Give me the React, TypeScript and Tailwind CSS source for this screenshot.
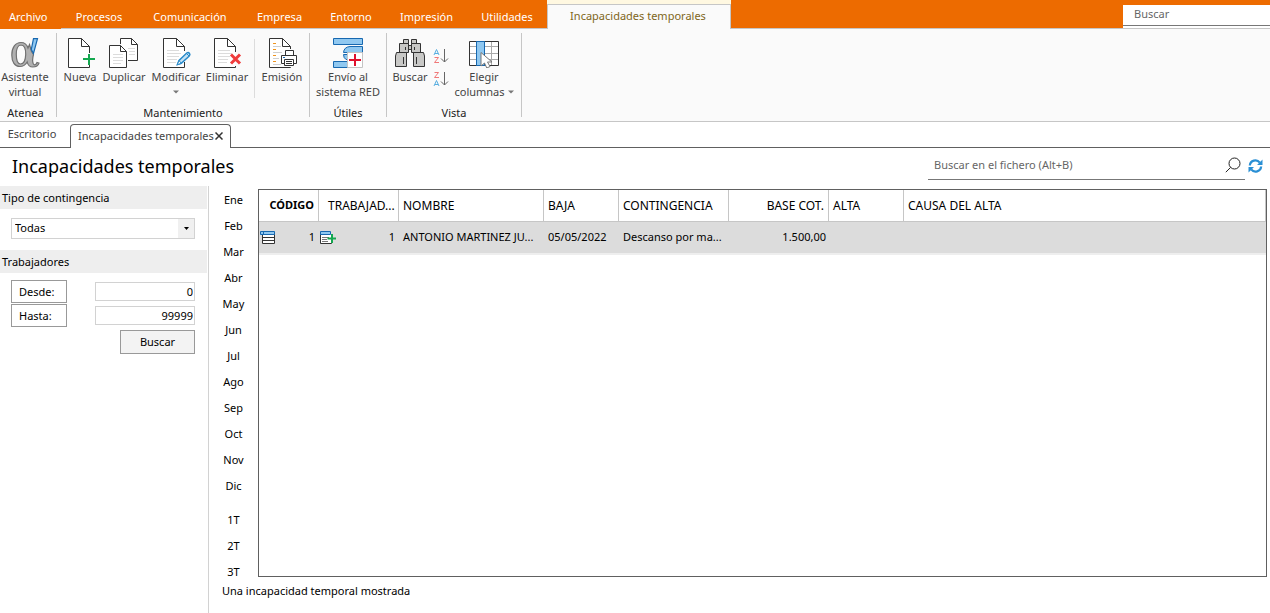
import React from 'react';

const menus: { label: string; width: string }[] = [
  { label: 'Procesos', width: 'w-[76px]' },
  { label: 'Comunicación', width: 'w-[106px]' },
  { label: 'Empresa', width: 'w-[73px]' },
  { label: 'Entorno', width: 'w-[70px]' },
  { label: 'Impresión', width: 'w-[81px]' },
  { label: 'Utilidades', width: 'w-[80px]' },
];

const months = ['Ene', 'Feb', 'Mar', 'Abr', 'May', 'Jun', 'Jul', 'Ago', 'Sep', 'Oct', 'Nov', 'Dic'];
const quarters = ['1T', '2T', '3T'];

const columns: { label: string; width: string; align: string }[] = [
  { label: 'CÓDIGO', width: 'w-[60px]', align: 'pr-[4px] text-right text-[11px] font-bold' },
  { label: 'TRABAJAD...', width: 'w-[80px]', align: 'pl-[9px] text-left font-normal' },
  { label: 'NOMBRE', width: 'w-[145px]', align: 'pl-[4px] text-left font-normal' },
  { label: 'BAJA', width: 'w-[75px]', align: 'pl-[4px] text-left font-normal' },
  { label: 'CONTINGENCIA', width: 'w-[110px]', align: 'pl-[4px] text-left font-normal' },
  { label: 'BASE COT.', width: 'w-[100px]', align: 'pr-[4px] text-right font-normal' },
  { label: 'ALTA', width: 'w-[75px]', align: 'pl-[4px] text-left font-normal' },
  { label: 'CAUSA DEL ALTA', width: '', align: 'pl-[4px] text-left font-normal' },
];

function Icon({ children }: { children: React.ReactNode }) {
  return (
    <svg width="32" height="32" viewBox="0 0 32 32" fill="none" className="shrink-0" aria-hidden="true">
      {children}
    </svg>
  );
}

function AlphaIcon() {
  return (
    <Icon>
      <path
        d="M20.500 8.500L22.500 15.500L24.500 18.500C23.500 22 23.300 25.500 24.300 27.800C25.200 29.500 27 29 28 26.500L30 27.200C29 30.500 26.500 31 23.800 31C20.500 31 18.800 29 18.200 26C16.500 29 13.800 30.500 10.800 30.500C5.800 30.500 2.800 26 2.800 19C2.800 11.500 6.500 6.500 12 6.500C15.500 6.500 17.800 8.500 19 12ZM12 9C8.800 9 7.300 13 7.300 18.500C7.300 24.500 8.500 28 11.500 28C14.500 28 16.500 24 16.700 18.500C16.800 12.500 15.300 9 12 9Z"
        fill="#b0b0b0"
        stroke="#707070"
        strokeWidth="1.200"
        fillRule="evenodd"
      />
      <path d="M24.500 2.700H28.500L24.500 17.500L22.300 13.500Z" fill="#90c8f0" stroke="#1768b0" strokeWidth="1.200" />
    </Icon>
  );
}

function PageLines({ x }: { x: number }) {
  return <path d={`M${x} 14.500h12M${x} 17.500h14M${x} 20.500h12M${x} 23.500h10M${x} 26.500h9`} stroke="#dcdcdc" />;
}

function NewIcon() {
  return (
    <Icon>
      <path d="M25.500 17V10.500L17.500 2.500H4.500V31.500H25.500V29" fill="#fff" stroke="#333" />
      <path d="M17.500 2.500V10.500H25.500" stroke="#333" />
      <path d="M25 18V29M19 23H31" stroke="#14a84f" strokeWidth="2" />
    </Icon>
  );
}

function CopyIcon() {
  return (
    <Icon>
      <g transform="translate(1 0)">
        <path d="M11.500 8V2.500H22.500L28.500 8.500V24.500H19" fill="#fff" stroke="#333" />
        <path d="M22.500 2.500V8.500H28.500" stroke="#333" />
        <path d="M19 12.500h7M20 15.500h6M20 18.500h6" stroke="#dcdcdc" />
        <path d="M.500 9.500H11.500L17.500 15.500V31.500H.500Z" fill="#fff" stroke="#333" />
        <path d="M11.500 9.500V15.500H17.500" stroke="#333" />
        <path d="M4 18.500h10M4 21.500h10M4 24.500h10M4 27.500h8" stroke="#dcdcdc" />
      </g>
    </Icon>
  );
}

function EditIcon() {
  return (
    <Icon>
      <path d="M24.500 15V10.500L16.500 2.500H3.500V31.500H24.500V26" fill="#fff" stroke="#333" />
      <path d="M16.500 2.500V10.500H24.500" stroke="#333" />
      <PageLines x={7} />
      <path d="M17.300 28.700L19 24.500L27 16.800Q28.500 16 29.500 17.500Q30.500 19 29.300 20L21.300 27.300Z" fill="#c5e2f5" stroke="#2588c8" strokeWidth="1.400" />
      <path d="M19 24.500L21.300 27.300L17.300 28.700ZM26.500 17.500L29 20" fill="#fff" stroke="#2588c8" />
    </Icon>
  );
}

function DeleteIcon() {
  return (
    <Icon>
      <path d="M24.500 16V10.500L16.500 2.500H3.500V31.500H24.500V30" fill="#fff" stroke="#333" />
      <path d="M16.500 2.500V10.500H24.500" stroke="#333" />
      <PageLines x={7} />
      <path d="M20 18.500L29 27.500M29 18.500L20 27.500" stroke="#f03c3c" strokeWidth="3" />
    </Icon>
  );
}

function PrintIcon() {
  return (
    <Icon>
      <path d="M24.500 13V10.500L16.500 2.500H3.500V31.500H24.500V31" fill="#fff" stroke="#333" />
      <path d="M16.500 2.500V10.500H24.500" stroke="#333" />
      <path d="M7 7.500h3M7 13.500h3M7 19.500h3M7 25.500h3" stroke="#f0941e" />
      <path d="M7 10.500h8M7 16.500h9M7 22.500h6M7 28.500h8" stroke="#cfcfcf" />
      <path d="M19.500 19.500V14.500H27.500V19.500" fill="#fff" stroke="#333" />
      <path d="M15.500 19.500H30.500V27.500H15.500Z" fill="#fff" stroke="#333" />
      <path d="M18.500 23.500H27.500V29.500H18.500Z" fill="#fff" stroke="#333" />
      <path d="M20 25.500h6M20 27.500h6" stroke="#333" />
      <path d="M17 21.500h2" stroke="#1768b0" />
    </Icon>
  );
}

function RedSystemIcon() {
  return (
    <Icon>
      <g fill="#90c8f0" stroke="#1768b0">
        <path d="M1.500 2.500H30.500V8.500H1.500Z" />
        <path d="M30.500 10.500V16.500H11.500Q12 11 18 10.500Z" />
        <path d="M11.500 18.500H18.500V23.500H14Q11.500 22 11.500 18.500Z" />
        <path d="M1.500 25.500H18V31.500H1.500Z" />
      </g>
      <path d="M15.500 16.500H30.500V31.500H15.500Z" fill="#fff" stroke="#c4c4c4" />
      <path d="M23 18V30M17 24H29" stroke="#e0102c" strokeWidth="2" />
    </Icon>
  );
}

function BinocularsIcon() {
  return (
    <Icon>
      <g fill="#c8c8c6" stroke="#333">
        <path d="M9.500 3.500H14.500V8H9.500ZM17.500 3.500H22.500V8H17.500Z" />
        <path d="M14.500 9.500H17.500V13.500H14.500Z" />
        <path d="M5.500 7.500H14.500V16.500H5.500ZM17.500 7.500H26.500V16.500H17.500Z" />
        <path d="M2.500 16.500H12.500V30.500H1.500V20ZM19.500 16.500H29.500L30.500 20V30.500H19.500Z" />
      </g>
      <path d="M9.500 21V28M22.500 21V28M11.500 11V14M20.500 11V14" stroke="#333" />
    </Icon>
  );
}

function ColumnsIcon() {
  return (
    <Icon>
      <path d="M1.500 5.500H30.500V29.500H1.500Z" fill="#fff" stroke="#333" />
      <path d="M2 10.500H30M2 17.500H30M2 23.500H30M23.500 6V29" stroke="#aaa" />
      <path d="M8.500 5.500H16.500V29.500H8.500Z" fill="#90c8f0" stroke="#1768b0" />
      <path d="M13 16.500V30L16.500 27L18.800 32L22 30.500L19.500 26H24Z" fill="#fff" stroke="#777" />
    </Icon>
  );
}

function SortIcon({ reverse = false }: { reverse?: boolean }) {
  const a = 'M1 7L3.500 1.500L6 7M2 5.500H5';
  const z = 'M1.500 1.500H5.500L1.500 6.500H6';
  return (
    <svg width="16" height="17" viewBox="0 0 16 17" fill="none" aria-hidden="true">
      <path d={reverse ? z : a} stroke={reverse ? '#f07878' : '#58aee0'} />
      <path d={reverse ? a : z} transform="translate(0 8)" stroke={reverse ? '#58aee0' : '#f07878'} />
      <path d="M11.500 1V14M8 10.500L11.500 14L15 10.500" stroke="#666" />
    </svg>
  );
}

function Caret() {
  return (
    <svg width="6" height="4" viewBox="0 0 6 4" className="inline-block" aria-hidden="true">
      <path d="M0 .500H6L3 3.500Z" fill="#777" />
    </svg>
  );
}

function RibbonButton({ icon, width, children }: { icon: React.ReactNode; width: string; children: React.ReactNode }) {
  return (
    <button type="button" className={`flex shrink-0 flex-col items-center whitespace-nowrap text-[#444] ${width}`}>
      {icon}
      <span className="mt-px flex flex-col items-center leading-[15px]">{children}</span>
    </button>
  );
}

function RibbonGroup({ title, width, children }: { title: string; width: string; children: React.ReactNode }) {
  return (
    <section className={`flex h-[84px] shrink-0 flex-col border-r border-[#c6c6c6] ${width}`}>
      <div className="flex flex-1 items-start pt-[3px]">{children}</div>
      <h2 className="text-center leading-[8px] text-[#222]">{title}</h2>
    </section>
  );
}

function Ribbon() {
  return (
    <div className="flex h-[93px] border-b border-[#c6c6c6] bg-[#fafafa] pt-[4px]">
      <RibbonGroup title="Atenea" width="w-[57px] pr-[5px]">
        <RibbonButton icon={<AlphaIcon />} width="w-[50px]">
          <span>Asistente</span>
          <span>virtual</span>
        </RibbonButton>
      </RibbonGroup>
      <RibbonGroup title="Mantenimiento" width="w-[253px]">
        <RibbonButton icon={<NewIcon />} width="w-[46px]">Nueva</RibbonButton>
        <RibbonButton icon={<CopyIcon />} width="w-[42px]">Duplicar</RibbonButton>
        <RibbonButton icon={<EditIcon />} width="ml-[2px] w-[58px]">
          <span>Modificar</span>
          <span className="flex h-[15px] items-center"><Caret /></span>
        </RibbonButton>
        <RibbonButton icon={<DeleteIcon />} width="w-[44px]">Eliminar</RibbonButton>
        <div className="mt-[3px] ml-[5px] h-[59px] w-px shrink-0 bg-[#dcdcdc]" />
        <RibbonButton icon={<PrintIcon />} width="w-[54px]">Emisión</RibbonButton>
      </RibbonGroup>
      <RibbonGroup title="Útiles" width="w-[77px]">
        <RibbonButton icon={<RedSystemIcon />} width="w-[76px]">
          <span>Envío al</span>
          <span>sistema RED</span>
        </RibbonButton>
      </RibbonGroup>
      <RibbonGroup title="Vista" width="w-[135px]">
        <RibbonButton icon={<BinocularsIcon />} width="w-[46px]">Buscar</RibbonButton>
        <div className="flex w-4 shrink-0 flex-col gap-[6px] pt-3">
          <button type="button" aria-label="Orden ascendente"><SortIcon /></button>
          <button type="button" aria-label="Orden descendente"><SortIcon reverse /></button>
        </div>
        <RibbonButton icon={<ColumnsIcon />} width="w-[70px]">
          <span>Elegir</span>
          <span className="flex items-center gap-[3px]">columnas <Caret /></span>
        </RibbonButton>
      </RibbonGroup>
    </div>
  );
}

function TopBar() {
  return (
    <header className="flex h-[29px] bg-[#ed6b00]">
      <button type="button" className="w-[61px] pl-[9px] text-left leading-[33px] text-white">Archivo</button>
      <nav className="flex flex-1 border-b border-[#c6c6c6]">
        {menus.map((m) => (
          <button key={m.label} type="button" className={`shrink-0 leading-[33px] text-white ${m.width}`}>
            {m.label}
          </button>
        ))}
        <div className="-mb-px ml-px w-[184px] shrink-0 -translate-x-px bg-[#fff8e1] pt-[4px]">
          <button type="button" className="block h-full w-full border-x border-t border-[#c6c6c6] bg-[#fafafa] pr-[2px] pb-[2px] leading-[22px] text-[#80661a]">
            Incapacidades temporales
          </button>
        </div>
        <div className="mt-[5px] ml-auto w-[147px] bg-white">
          <input aria-label="Buscar" placeholder="Buscar" className="block h-[21px] w-full border-b border-[#777] bg-white pb-[3px] pl-[11px] outline-none placeholder:text-[#666]" />
        </div>
      </nav>
    </header>
  );
}

function DocumentTabs() {
  return (
    <div className="flex h-[26px] shrink-0 text-[#444]">
      <button type="button" className="w-[70px] border-b border-[#606060] pr-[6px] pb-px text-center leading-[24px]">Escritorio</button>
      <div className="mt-[2px] flex w-[161px] items-center gap-px rounded-t-[4px] border-x border-t border-[#606060] pb-px pl-[7px] whitespace-nowrap">
        <button type="button">Incapacidades temporales</button>
        <button type="button" aria-label="Cerrar">
          <svg width="8" height="8" viewBox="0 0 8 8" aria-hidden="true">
            <path d="M.500 .500L7.500 7.500M7.500 .500L.500 7.500" stroke="#333" strokeWidth="1.500" />
          </svg>
        </button>
      </div>
      <div className="flex-1 border-b border-[#606060]" />
    </div>
  );
}

function TitleRow() {
  return (
    <div className="flex h-[38px] shrink-0 items-start justify-between pr-[7px] pl-3">
      <h1 className="text-[18px] leading-[36px]">Incapacidades temporales</h1>
      <div className="flex items-center gap-[3px]">
        <div className="flex h-[32px] w-[317px] items-center border-b border-[#777] pt-[3px] pr-[4px] pl-[6px]">
          <input aria-label="Buscar en el fichero" placeholder="Buscar en el fichero (Alt+B)" className="min-w-0 flex-1 outline-none placeholder:text-[#666]" />
          <svg width="16" height="16" viewBox="0 0 16 16" fill="none" stroke="#222" aria-hidden="true">
            <circle cx="9.500" cy="6.500" r="5.500" />
            <path d="M5.600 10.400L.800 15.200" />
          </svg>
        </div>
        <button type="button" aria-label="Actualizar" className="pt-[4px]">
          <svg width="15" height="14" viewBox="0 0 15 14" fill="none" aria-hidden="true">
            <path d="M1.800 6.500A5.600 5.600 0 0 1 11.800 3.600M13.200 7.500A5.600 5.600 0 0 1 3.200 10.400" stroke="#2a8fd4" strokeWidth="2.200" />
            <path d="M14.500 .500V6H9ZM.500 13.500V8H6Z" fill="#2a8fd4" />
          </svg>
        </button>
      </div>
    </div>
  );
}

function Sidebar() {
  return (
    <aside className="w-[209px] shrink-0 border-r border-[#d2d2d2]">
      <h2 className="mr-px bg-[#eee] pl-[2px] leading-[23px]">
        <label htmlFor="tipo">Tipo de contingencia</label>
      </h2>
      <div className="relative mt-[9px] mr-[13px] ml-[11px] h-[21px] border border-[#d2d2d2]">
        <select id="tipo" className="block h-full w-full appearance-none bg-white pl-[3px] outline-none">
          <option>Todas</option>
        </select>
        <span className="pointer-events-none absolute inset-y-0 right-0 flex w-4 items-center justify-center bg-[#f0f0f0]">
          <svg width="5" height="3" viewBox="0 0 5 3" aria-hidden="true"><path d="M0 0H5L2.500 3Z" fill="#000" /></svg>
        </span>
      </div>
      <h2 className="mt-[11px] mr-px bg-[#eee] pl-[2px] leading-[23px]">Trabajadores</h2>
      <div className="mt-[7px] mr-[13px] ml-[11px] flex flex-col gap-px">
        <div className="flex items-center justify-between">
          <button id="desde" type="button" className="h-[23px] w-[56px] border border-[#999] bg-white pt-px pl-[7px] text-left">Desde:</button>
          <input aria-labelledby="desde" defaultValue="0" className="h-[19px] w-[100px] border border-[#d2d2d2] px-px pb-px text-right outline-none" />
        </div>
        <div className="flex items-center justify-between">
          <button id="hasta" type="button" className="h-[23px] w-[56px] border border-[#999] bg-white pt-px pl-[7px] text-left">Hasta:</button>
          <input aria-labelledby="hasta" defaultValue="99999" className="h-[19px] w-[100px] border border-[#d2d2d2] px-px pb-px text-right outline-none" />
        </div>
        <button type="button" className="mt-[2px] h-[24px] w-[75px] self-end border border-[#999] bg-[#f3f3f3]">Buscar</button>
      </div>
    </aside>
  );
}

function PeriodList() {
  return (
    <nav className="flex w-[49px] shrink-0 flex-col items-center gap-[10px] pt-[6px]">
      {months.map((m) => (
        <button key={m} type="button" className="leading-4">{m}</button>
      ))}
      <div className="flex flex-col items-center gap-[10px] pt-2">
        {quarters.map((q) => (
          <button key={q} type="button" className="leading-4">{q}</button>
        ))}
      </div>
    </nav>
  );
}

function RecordIcon() {
  return (
    <svg width="15" height="13" viewBox="0 0 15 13" fill="none" aria-hidden="true">
      <path d="M2.500 3V12.500H14.500V3" fill="#fff" stroke="#333" />
      <path d="M3 6.500H14M3 9.500H14" stroke="#333" />
      <path d="M.500 .500H14.500V3.500H.500ZM3.500 .500V3.500" fill="#90c8f0" stroke="#1768b0" />
    </svg>
  );
}

function AddRecordIcon() {
  return (
    <svg width="16" height="13" viewBox="0 0 16 13" fill="none" aria-hidden="true">
      <path d="M.500 3V12.500H11.500V3" fill="#fff" stroke="#333" />
      <path d="M2 6.500H9M2 8.500H7M2 10.500H8" stroke="#777" />
      <path d="M.500 .500H10.500V3.500H.500Z" fill="#90c8f0" stroke="#1768b0" />
      <path d="M12 3V12M7.500 7.500H16" stroke="#14a84f" strokeWidth="2" />
    </svg>
  );
}

function RecordsTable() {
  return (
    <div className="mt-[3px] mr-[3px] mb-[3px] min-w-0 flex-1 border border-[#606060]">
      <table className="w-full table-fixed border-separate border-spacing-0 whitespace-nowrap">
        <thead className="text-[12px]">
          <tr>
            {columns.map((c) => (
              <th key={c.label} scope="col" className={`h-[32px] border-r border-b border-[#c6c6c6] ${c.width} ${c.align}`}>
                {c.label}
              </th>
            ))}
          </tr>
        </thead>
        <tbody>
          <tr className="h-[33px] bg-[#dcdcdc] [&>td]:border-b-2 [&>td]:border-[#eee]">
            <td className="pr-[4px] pl-px">
              <div className="flex items-center justify-between"><RecordIcon />1</div>
            </td>
            <td className="pr-[4px] pl-px">
              <div className="flex items-center justify-between"><AddRecordIcon />1</div>
            </td>
            <td className="pl-[4px]">ANTONIO MARTINEZ JU...</td>
            <td className="pl-[4px]">05/05/2022</td>
            <td className="pl-[4px]">Descanso por ma...</td>
            <td className="pr-[3px] text-right">1.500,00</td>
            <td />
            <td />
          </tr>
        </tbody>
      </table>
    </div>
  );
}

export default function App() {
  return (
    <div className="flex min-h-screen flex-col bg-white font-['Noto_Sans','Open_Sans',sans-serif] text-[11px] text-black">
      <TopBar />
      <Ribbon />
      <DocumentTabs />
      <TitleRow />
      <div className="flex flex-1">
        <Sidebar />
        <main className="flex min-w-0 flex-1 flex-col">
          <div className="flex flex-1">
            <PeriodList />
            <RecordsTable />
          </div>
          <p className="h-[33px] pt-[3px] pl-[13px] leading-4">Una incapacidad temporal mostrada</p>
        </main>
      </div>
    </div>
  );
}
